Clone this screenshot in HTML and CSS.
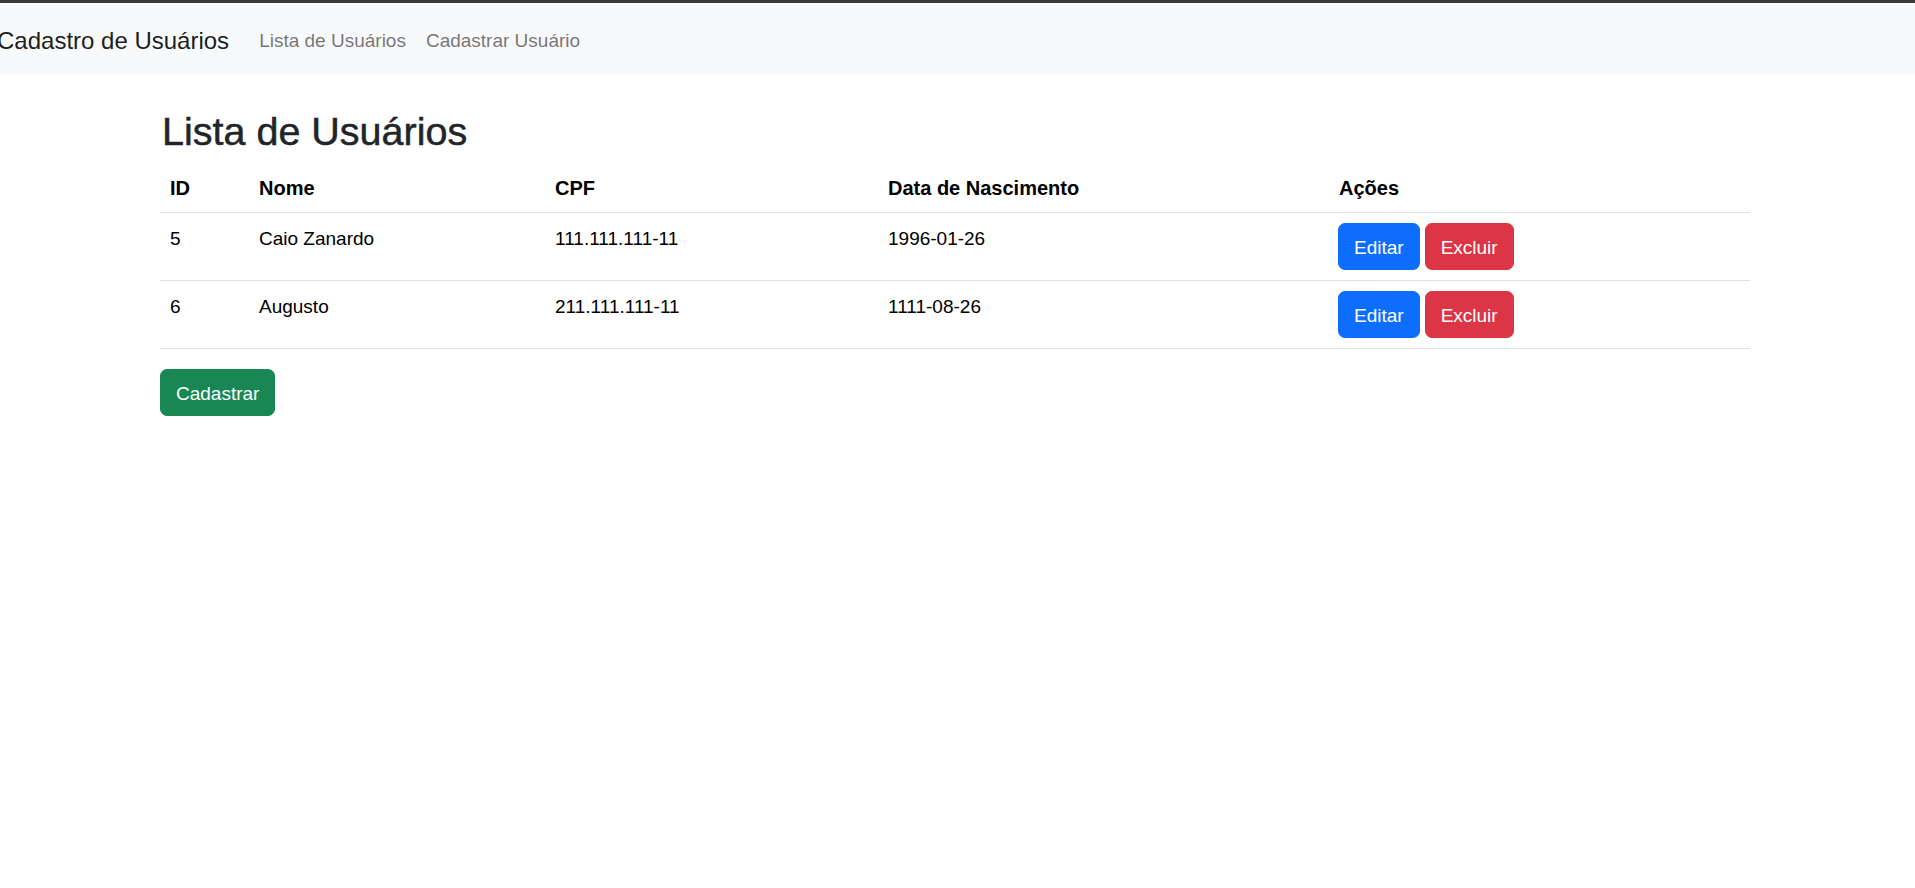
FILE: index.html
```html
<!DOCTYPE html>
<html lang="pt-BR">
<head>
<meta charset="utf-8">
<title>Cadastro de Usuários</title>
<link rel="stylesheet" href="styles.css">
</head>
<body>
<nav class="navbar">
  <a class="brand" href="#">Cadastro de Usuários</a>
  <ul class="nav-links">
    <li><a class="nav-link" href="#">Lista de Usuários</a></li>
    <li><a class="nav-link" href="#">Cadastrar Usuário</a></li>
  </ul>
</nav>
<main class="container">
  <h2 class="title">Lista de Usuários</h2>
  <table class="table">
    <colgroup>
      <col class="col-id">
      <col class="col-nome">
      <col class="col-cpf">
      <col class="col-data">
      <col class="col-acoes">
    </colgroup>
    <thead>
      <tr>
        <th>ID</th>
        <th>Nome</th>
        <th>CPF</th>
        <th>Data de Nascimento</th>
        <th>Ações</th>
      </tr>
    </thead>
    <tbody>
      <tr>
        <td>5</td>
        <td>Caio Zanardo</td>
        <td>111.111.111-11</td>
        <td>1996-01-26</td>
        <td class="actions"><button class="btn btn-primary">Editar</button><button class="btn btn-danger">Excluir</button></td>
      </tr>
      <tr>
        <td>6</td>
        <td>Augusto</td>
        <td>211.111.111-11</td>
        <td>1111-08-26</td>
        <td class="actions"><button class="btn btn-primary">Editar</button><button class="btn btn-danger">Excluir</button></td>
      </tr>
    </tbody>
  </table>
  <button class="btn btn-success">Cadastrar</button>
</main>
</body>
</html>
```
FILE: styles.css
```css
* { box-sizing: border-box; }

html, body {
  margin: 0;
  padding: 0;
  background: #fff;
}

body {
  font-family: "Liberation Sans", Arial, sans-serif;
  font-size: 19px;
  line-height: 30px;
  color: #212529;
  border-top: 3px solid #3b3b3b;
}

a { text-decoration: none; }

.navbar {
  display: flex;
  align-items: center;
  height: 71px;
  padding: 13px 0 8px;
  background: #f8f9fa;
}

.brand {
  margin-left: -3px;
  margin-right: 20px;
  padding: 6px 0;
  font-size: 24px;
  line-height: 38px;
  color: rgba(0, 0, 0, 0.9);
  white-space: nowrap;
}

.nav-links {
  display: flex;
  margin: 0;
  padding: 0;
  list-style: none;
}

.nav-link {
  display: block;
  padding: 8px 10px;
  color: rgba(0, 0, 0, 0.55);
  white-space: nowrap;
}

.container {
  width: 1590px;
  margin: 30px 0 0 160px;
}

.title {
  margin: 0 0 7px 2px;
  padding-top: 3px;
  font-size: 39.5px;
  font-weight: 500;
  line-height: 48px;
  color: #212529;
  -webkit-text-stroke: 0.5px #212529;
}

.table {
  width: 1590px;
  table-layout: fixed;
  border-collapse: collapse;
  margin-bottom: 20px;
  color: #000;
}

.col-id { width: 89px; }
.col-nome { width: 296px; }
.col-cpf { width: 333px; }
.col-data { width: 451px; }
.col-acoes { width: 421px; }

.table th,
.table td {
  padding: 11px 10px 9px;
  text-align: left;
  vertical-align: top;
  border-bottom: 1px solid #dee2e6;
}

.table th {
  font-size: 20px;
  font-weight: 700;
  line-height: 30px;
}

.table td.actions {
  padding: 10px 10px 10px 9px;
  font-size: 0;
  line-height: 0;
}

.btn {
  display: inline-block;
  height: 47px;
  padding: 9px 15px 6px;
  font-family: inherit;
  font-size: 19px;
  line-height: 30px;
  color: #fff;
  border: 1px solid transparent;
  border-radius: 7px;
  cursor: pointer;
  vertical-align: top;
}

.actions .btn { margin-right: 5px; }

.btn-primary { background: #0d6efd; border-color: #0d6efd; }
.btn-danger { background: #dc3545; border-color: #dc3545; }
.btn-success { background: #198754; border-color: #198754; }
```
